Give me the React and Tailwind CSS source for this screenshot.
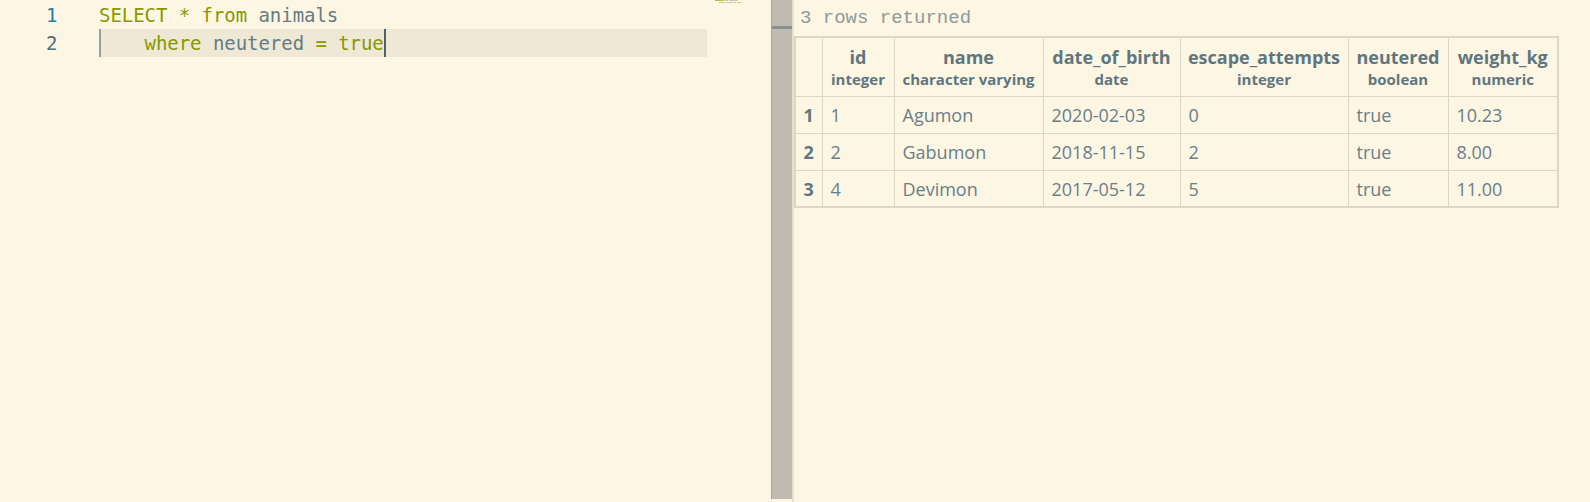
const lines = [
    [
        { t: "SELECT", c: "text-[#859900]" },
        { t: " * ", c: "text-[#859900]" },
        { t: "from", c: "text-[#859900]" },
        { t: " animals", c: "text-[#657b83]" },
    ],
    [
        { t: "    ", c: "" },
        { t: "where", c: "text-[#859900]" },
        { t: " neutered ", c: "text-[#657b83]" },
        { t: "=", c: "text-[#859900]" },
        { t: " ", c: "" },
        { t: "true", c: "text-[#859900]" },
    ],
];

const columns = [
    { name: "id", type: "integer", w: "w-[72px]" },
    { name: "name", type: "character varying", w: "w-[149px]" },
    { name: "date_of_birth", type: "date", w: "w-[137px]" },
    { name: "escape_attempts", type: "integer", w: "w-[168px]" },
    { name: "neutered", type: "boolean", w: "w-[100px]" },
    { name: "weight_kg", type: "numeric", w: "w-[110px]" },
];

const rows = [
    ["1", "Agumon", "2020-02-03", "0", "true", "10.23"],
    ["2", "Gabumon", "2018-11-15", "2", "true", "8.00"],
    ["4", "Devimon", "2017-05-12", "5", "true", "11.00"],
];

const uiFont = "font-['Open_Sans','Noto_Sans',sans-serif]";

function Editor() {
    return (
        <div className="relative w-[771px] h-full bg-[#fdf6e3] font-['DejaVu_Sans_Mono',monospace] text-[19px] tracking-[-0.05px]">
            {/* minimap */}
            <div className="absolute left-[715px] top-0 flex flex-col gap-[1px]">
                <div className="flex gap-[1px]">
                    <div className="w-[9px] h-[1px] bg-[#b8c040]" />
                    <div className="w-[3px] h-[1px] bg-[#c8cf70]" />
                    <div className="w-[9px] h-[1px] bg-[#c4c8b8]" />
                </div>
                <div className="flex gap-[1px] pl-[4px]">
                    <div className="w-[6px] h-[1px] bg-[#c8cf70]" />
                    <div className="w-[10px] h-[1px] bg-[#c4c8b8]" />
                    <div className="w-[4px] h-[1px] bg-[#c8cf70]" />
                </div>
            </div>
            <div className="pt-[1px]">
                {lines.map((line, i) => (
                    <div key={i} className="flex h-[28px] items-center">
                        <div
                            className={
                                "w-[99px] pl-[46px] " +
                                (i === 0 ? "text-[#1f80a6]" : "text-[#4f6f7c]")
                            }
                        >
                            {i + 1}
                        </div>
                        <div
                            className={
                                "relative flex items-center h-full w-[608px] whitespace-pre " +
                                (i === 1 ? "bg-[#eee8d5]" : "")
                            }
                        >
                            {i === 1 && (
                                <div className="absolute left-0 top-0 h-full w-[2px] bg-[#93a1a1]" />
                            )}
                            {line.map((s, j) => (
                                <span key={j} className={s.c}>
                                    {s.t}
                                </span>
                            ))}
                            {i === 1 && (
                                <span className="inline-block w-[2px] h-[28px] bg-[#4d6170]" />
                            )}
                        </div>
                    </div>
                ))}
            </div>
        </div>
    );
}

function Splitter() {
    return (
        <div className="flex h-full">
            <div className="relative w-[21px] h-[499px] bg-[#bfbbb0] border-l border-[#a8a49a]">
                <div className="mt-[26px] h-[3px] w-full bg-[#879095]" />
            </div>
            <div className="w-[2px] h-full bg-[#e6e0cc]" />
        </div>
    );
}

function Results() {
    return (
        <div className={"flex-1 h-full bg-[#fdf6e3] " + uiFont}>
            <div className="h-[36px] pl-[6px] pt-[5px] font-['Liberation_Mono',monospace] text-[19px] leading-[26px] text-[#8e9a9a]">
                3 rows returned
            </div>
            <table className="table-fixed border-collapse border-2 border-[#ddd6c3] text-[#5d7682]">
                <thead>
                    <tr className="h-[59px]">
                        <th className="w-[27px] border border-[#ddd6c3]" />
                        {columns.map((c) => (
                            <th
                                key={c.name}
                                className={c.w + " border border-[#ddd6c3] text-center align-middle px-[2px]"}
                            >
                                <div className="text-[18px] leading-[24px] font-bold">
                                    {c.name}
                                </div>
                                <div className="text-[15px] leading-[20px] font-bold">
                                    {c.type}
                                </div>
                            </th>
                        ))}
                    </tr>
                </thead>
                <tbody>
                    {rows.map((r, i) => (
                        <tr key={i} className="h-[37px]">
                            <td className="border border-[#ddd6c3] text-center font-bold text-[18px] pt-[2px]">
                                {i + 1}
                            </td>
                            {r.map((v, j) => (
                                <td
                                    key={j}
                                    className="border border-[#ddd6c3] pl-[8px] pt-[2px] text-[18px] text-[#687f8a] whitespace-nowrap"
                                >
                                    {v}
                                </td>
                            ))}
                        </tr>
                    ))}
                </tbody>
            </table>
        </div>
    );
}

export default function App() {
    return (
        <div className="flex w-[1590px] h-[502px] bg-[#fdf6e3] overflow-hidden">
            <Editor />
            <Splitter />
            <Results />
        </div>
    );
}
